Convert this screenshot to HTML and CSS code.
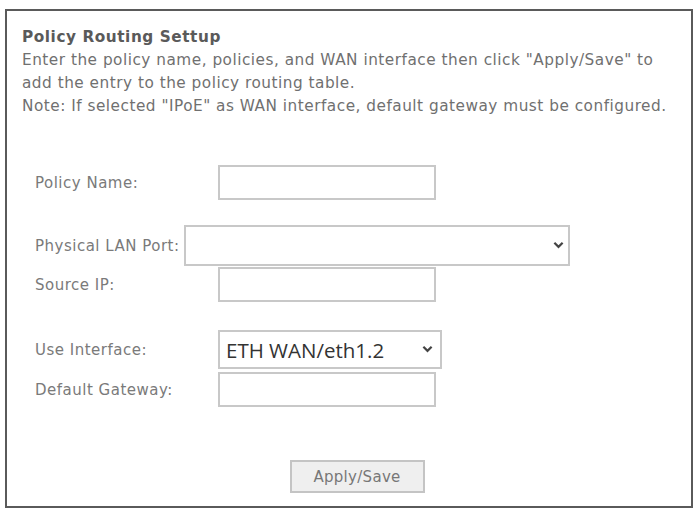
FILE: index.html
```html
<!DOCTYPE html>
<html lang="en">
<head>
    <meta charset="UTF-8">
    <title>Policy Routing Settup</title>
    <link rel="stylesheet" href="styles.css">
</head>
<body>
    <div class="panel">
        <div class="intro">
            <div class="intro-title">Policy Routing Settup</div>
            <div>Enter the policy name, policies, and WAN interface then click "Apply/Save" to</div>
            <div>add the entry to the policy routing table.</div>
            <div>Note: If selected "IPoE" as WAN interface, default gateway must be configured.</div>
        </div>

        <form class="route-form">
            <div class="row row-name">
                <label class="field-label">Policy Name:</label>
                <input class="text-box" type="text">
            </div>

            <div class="row row-port">
                <label class="field-label field-label-inline">Physical LAN Port:</label>
                <div class="select-wrap select-wide">
                    <select class="select-box"><option></option></select>
                    <svg class="chevron" viewBox="0 0 12 8"><path d="M1.5 1.5 6 6l4.5-4.5" fill="none" stroke="currentColor" stroke-width="2.4"/></svg>
                </div>
            </div>
            <div class="row row-source">
                <label class="field-label">Source IP:</label>
                <input class="text-box" type="text">
            </div>

            <div class="row row-iface">
                <label class="field-label">Use Interface:</label>
                <div class="select-wrap select-iface">
                    <select class="select-box"><option>ETH WAN/eth1.2</option></select>
                    <svg class="chevron" viewBox="0 0 12 8"><path d="M1.5 1.5 6 6l4.5-4.5" fill="none" stroke="currentColor" stroke-width="2.4"/></svg>
                </div>
            </div>
            <div class="row row-gateway">
                <label class="field-label">Default Gateway:</label>
                <input class="text-box" type="text">
            </div>

            <div class="actions">
                <button type="button" class="save-btn">Apply/Save</button>
            </div>
        </form>
    </div>
</body>
</html>
```

FILE: styles.css
```css
* {
    margin: 0;
    padding: 0;
    box-sizing: border-box;
}

body {
    background: #fff;
    font-family: "DejaVu Sans", Verdana, sans-serif;
    color: #707070;
    padding: 9px 2px 1px 5px;
}

.panel {
    border: 2px solid #5a5a5a;
    height: 499px;
    padding: 15px 0 0 15px;
}

.intro {
    font-size: 15.3px;
    letter-spacing: 0.5px;
    line-height: 23px;
    color: #707070;
    white-space: nowrap;
}

.intro-title {
    font-weight: bold;
    letter-spacing: 0.55px;
    color: #5a5a5a;
}

.route-form {
    display: flex;
    flex-direction: column;
    padding-left: 13px;
    margin-top: 47px;
}

.row {
    display: flex;
    align-items: center;
}

.field-label {
    width: 183px;
    font-size: 15px;
    letter-spacing: 0.5px;
    color: #7a7a7a;
    white-space: nowrap;
}

.field-label-inline {
    width: auto;
    margin-right: 4px;
}

.text-box {
    width: 218px;
    height: 35px;
    border: 2px solid #c8c8c8;
    background: #fff;
    outline: none;
}

.row-port {
    margin-top: 25px;
}

.row-source {
    margin-top: 1px;
}

.row-iface {
    margin-top: 28px;
}

.row-gateway {
    margin-top: 3px;
}

.select-wrap {
    position: relative;
}

.select-box {
    appearance: none;
    -webkit-appearance: none;
    width: 100%;
    height: 100%;
    border: 2px solid #c8c8c8;
    background: #fff;
    font-family: "Open Sans", "Noto Sans", sans-serif;
    color: #333;
    outline: none;
}

.select-wide {
    width: 386px;
    height: 41px;
}

.select-iface {
    width: 224px;
    height: 39px;
}

.select-iface .select-box {
    font-size: 20.5px;
    padding-left: 6px;
}

.chevron {
    position: absolute;
    top: 50%;
    right: 6px;
    width: 11px;
    height: 8px;
    margin-top: -5px;
    color: #444;
    pointer-events: none;
}

.select-iface .chevron {
    right: 9px;
}

.actions {
    display: flex;
    justify-content: center;
    margin-top: 53px;
    padding-right: 13px;
}

.save-btn {
    width: 135px;
    height: 33px;
    margin-left: 1px;
    border: 2px solid #c4c4c4;
    background: #efefef;
    color: #777;
    font-family: "DejaVu Sans", Verdana, sans-serif;
    font-size: 15px;
    letter-spacing: 0.3px;
}
```
